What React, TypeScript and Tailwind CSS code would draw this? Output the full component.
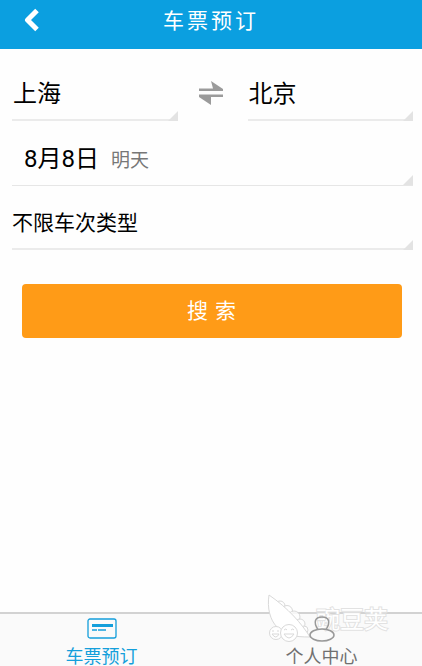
import React from "react";

const cities = ["上海", "北京", "广州", "深圳"];
const trainTypes = ["不限车次类型", "高铁动车", "普通列车"];

function Corner() {
  return (
    <svg className="pointer-events-none absolute right-0 bottom-0 size-[10px]" viewBox="0 0 10 10" aria-hidden="true">
      <path d="M10 0V10H0Z" fill="#e3e3e3" />
    </svg>
  );
}

function Spinner({ label, options, value, size }: { label: string; options: string[]; value: string; size: string }) {
  return (
    <div className="relative min-w-0 flex-1 border-b-2 border-[#ebebeb]">
      <select aria-label={label} defaultValue={value} className={`block w-full appearance-none bg-transparent text-black outline-none ${size}`}>
        {options.map((o) => (
          <option key={o}>{o}</option>
        ))}
      </select>
      <span className="absolute right-0 -bottom-0.5 size-[10px]">
        <Corner />
      </span>
    </div>
  );
}

function Watermark() {
  return (
    <div className="pointer-events-none absolute right-[34px] bottom-[22px] flex items-start" aria-hidden="true">
      <svg className="h-[52px] w-[50px]" viewBox="0 0 50 52" fill="#ffffff" fillOpacity="0.8" stroke="#d9d9d9" strokeWidth="1">
        <circle cx="14" cy="14" r="5" />
        <circle cx="21" cy="19" r="5.500" />
        <circle cx="28" cy="25" r="6" />
        <circle cx="34" cy="32" r="5" />
        <circle cx="38" cy="38" r="4" />
        <path d="M3 3C1 16 4 28 11 35C18 43 28 45 44 45C36 32 22 16 3 3Z" fillOpacity="1" />
        <circle cx="10" cy="41" r="6.500" fillOpacity="1" />
        <circle cx="23" cy="41" r="8.500" fillOpacity="1" />
        <path d="M6 42Q10 48 13 42ZM18 42Q23 50 28 42ZM18 38q2-2 3 0M25 38q2-2 3 0M6 39h2M11 39h2" />
      </svg>
      <span className="mt-[14px] text-2xl leading-7 text-white [-webkit-text-stroke:2px_#e2e2e2] [paint-order:stroke]">豌豆荚</span>
    </div>
  );
}

export default function App() {
  return (
    <div className="relative flex min-h-screen flex-col overflow-hidden bg-[#fefefe] font-['Roboto','Noto_Sans_CJK_SC',sans-serif]">
      <header className="grid h-[49px] grid-cols-[64px_1fr_64px] items-start bg-[#0b9fe0] text-white">
        <button aria-label="返回" className="flex h-10 items-center pl-6">
          <svg className="h-6 w-4" viewBox="0 0 16 24" fill="none" stroke="currentColor" strokeWidth="5">
            <path d="M13 2.500L3.500 12L13 21.500" strokeLinejoin="round" />
          </svg>
        </button>
        <h1 className="text-center text-[21px] leading-[42px] tracking-[3px]">车票预订</h1>
      </header>

      <main className="flex-1 pr-[9px] pl-3">
        <div className="flex items-end pt-5">
          <Spinner label="出发城市" options={cities} value="上海" size="h-[50px] pl-px text-2xl leading-10" />
          <button aria-label="交换城市" className="flex h-[52px] w-[70px] items-start justify-center pt-3 pr-1">
            <svg className="h-6 w-6" viewBox="0 0 24 24" fill="#9b9b9b">
              <path d="M12 0L24 8V10H0V7.500H14ZM0 13.500H24V16H12V24L0 16Z" />
            </svg>
          </button>
          <Spinner label="到达城市" options={cities} value="北京" size="h-[50px] pl-px text-2xl leading-10" />
        </div>
        <button className="relative flex h-[65px] w-full items-baseline border-b border-[#e6e6e6] pt-[22px] pl-3 text-2xl leading-8 text-black">
          8月8日<span className="ml-3 text-[19px] text-[#777777]">明天</span>
          <Corner />
        </button>
        <div className="flex">
          <Spinner label="车次类型" options={trainTypes} value="不限车次类型" size="h-[62px] pt-3 text-[21px] leading-10" />
        </div>
        <div className="pt-[34px] pr-[11px] pl-[10px]">
          <button className="h-[54px] w-full rounded bg-[#ff9b17] pt-0.5 text-[21px] tracking-[1px] text-white">搜 索</button>
        </div>
      </main>

      <nav className="grid h-[54px] grid-cols-2 border-t-2 border-[#d2d2d2] bg-[#fafafa] text-lg leading-[18px]">
        <a href="#tickets" className="flex flex-col items-center justify-between pt-1 pr-2 text-[#149fdb]">
          <svg className="h-[22px] w-[30px] shrink-0" viewBox="0 0 30 22" fill="none" stroke="currentColor">
            <rect x="1" y="1" width="28" height="19" rx="2" strokeWidth="1.3" />
            <path d="M5 7.500H26" strokeWidth="3" />
            <path d="M5 12H10M11 12H19" strokeWidth="1.5" />
          </svg>
          <span className="whitespace-nowrap">车票预订</span>
        </a>
        <a href="#account" className="relative z-10 flex flex-col items-center justify-between pt-0.5 pl-2.5 text-[#707070]">
          <svg className="h-[26px] w-[26px] shrink-0" viewBox="0 0 26 26" fill="none" stroke="#999999" strokeWidth="1.5">
            <path d="M9 13.500C4 6 6 1 13 1S22 6 17 13.500" />
            <ellipse cx="13" cy="19" rx="12" ry="6" />
          </svg>
          <span className="whitespace-nowrap">个人中心</span>
        </a>
      </nav>
      <Watermark />
    </div>
  );
}
